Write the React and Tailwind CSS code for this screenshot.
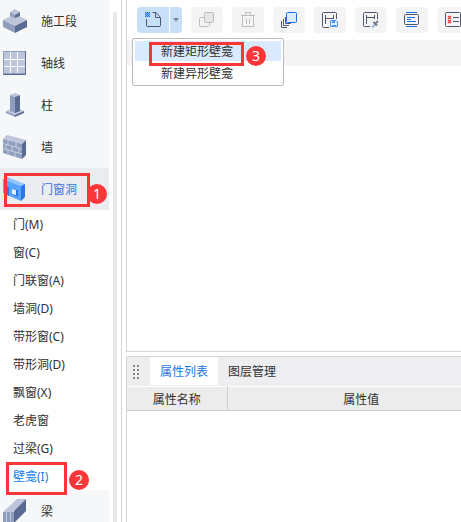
import React from "react";

function StageIcon() {
  return (
    <svg width="24" height="24" viewBox="0 0 24 24">
      <path d="M0 11L12 5L24 11L12 17Z" fill="#bcc5d9" />
      <path d="M0 11L12 17V24L0 18Z" fill="#8f9ebf" />
      <path d="M12 17L24 11V18L12 24Z" fill="#5a6b91" />
      <path d="M7 3L12 0L17 3L12 6Z" fill="#bcc5d9" />
      <path d="M7 3L12 6V9L7 7Z" fill="#8f9ebf" />
      <path d="M12 6L17 3V7L12 9Z" fill="#5a6b91" />
    </svg>
  );
}

function AxisIcon() {
  return (
    <svg width="24" height="24" viewBox="0 0 24 24">
      <path d="M0 0H23V24H0Z" fill="#5a6b91" />
      <path d="M0 0H22V23H0Z" fill="#8f9ebf" />
      <path d="M1 1H22V22H1Z" fill="#bcc5d9" />
      <path d="M7.500 1V22M14.500 1V22M1 8.500H22M1 15.500H22" stroke="#fff" />
    </svg>
  );
}

function ColumnIcon() {
  return (
    <svg width="24" height="24" viewBox="0 0 24 24">
      <path d="M3 18L12 14L21 18L12 22Z" fill="#bcc5d9" />
      <path d="M3 18L12 22V24L3 20Z" fill="#8f9ebf" />
      <path d="M12 22L21 18V20L12 24Z" fill="#5a6b91" />
      <path d="M7 2L12 0L17 2L12 4Z" fill="#bcc5d9" />
      <path d="M7 2L12 4V20L7 18Z" fill="#8f9ebf" />
      <path d="M12 4L17 2V18L12 20Z" fill="#5a6b91" />
    </svg>
  );
}

function WallIcon() {
  return (
    <svg width="24" height="24" viewBox="0 0 24 24">
      <path d="M0 4L4 0L23 5L19 9Z" fill="#bcc5d9" />
      <path d="M0 4L19 9V24L0 18Z" fill="#8f9ebf" />
      <path d="M19 9L23 5V20L19 24Z" fill="#5a6b91" />
      <path
        d="M0 8.500L19 14M0 13.500L19 19M5 5.500V10M13 7.500V12M9 11V16M16 13V18M3 9.500V14M5 15V20M12 17V22"
        stroke="#c6cee0"
        fill="none"
      />
    </svg>
  );
}

function OpeningIcon() {
  return (
    <svg width="24" height="24" viewBox="0 0 24 24">
      <path d="M0 2L4 0L22 7L18 9Z" fill="#8fc5ff" />
      <path d="M18 9L22 7V20L18 24Z" fill="#2b77e8" />
      <path
        d="M0 2L18 9V24L6 19V10L4 9V18L0 16ZM9 11V18L15 20V13Z"
        fill="#55a5ff"
        fillRule="evenodd"
      />
      <path d="M9 11L15 13V20L9 18Z" fill="#2b77e8" />
      <path d="M9 12L13 13V18L9 17Z" fill="#ebf3ff" />
      <path d="M4 9L6 10V19L4 18Z" fill="#2b77e8" />
    </svg>
  );
}

function BeamIcon() {
  return (
    <svg width="24" height="24" viewBox="0 0 24 24">
      <path d="M0 13L14 0H23L10 13Z" fill="#bcc5d9" />
      <path d="M0 13H11V25H0Z" fill="#8f9ebf" />
      <path d="M11 12L23 0V12L11 24Z" fill="#5a6b91" />
      <path d="M3.500 13V24M7.500 13V24" stroke="#bcc5d9" />
    </svg>
  );
}

const groups = [
  { label: "施工段", Icon: StageIcon },
  { label: "轴线", Icon: AxisIcon },
  { label: "柱", Icon: ColumnIcon },
  { label: "墙", Icon: WallIcon },
  { label: "门窗洞", Icon: OpeningIcon, open: true, mark: 1 },
];

const openings = [
  "门(M)",
  "窗(C)",
  "门联窗(A)",
  "墙洞(D)",
  "带形窗(C)",
  "带形洞(D)",
  "飘窗(X)",
  "老虎窗",
  "过梁(G)",
];

function Badge({ className, children }) {
  return (
    <span
      className={
        "pointer-events-none absolute z-20 flex size-5 items-center justify-center rounded-full bg-[#fb3638] text-sm text-white " +
        className
      }
    >
      {children}
    </span>
  );
}

function Frame({ className }) {
  return (
    <span className={"pointer-events-none absolute z-20 border-3 border-[#fb3638] " + className} />
  );
}

function Group({ label, Icon, open, mark }) {
  return (
    <div className="relative">
      <button
        type="button"
        aria-expanded={!!open}
        className={
          "flex h-[42px] w-full items-center gap-[14px] pl-[3px] text-left " +
          (open ? "bg-[#ebecf0] text-[#3f72e0]" : "bg-[#f5f7f9]")
        }
      >
        <Icon />
        <span className="pt-0.5">{label}</span>
      </button>
      {mark && (
        <>
          <Frame className="top-[5px] right-[19px] bottom-[3px] left-1" />
          <Badge className="top-4 left-[87px]">{mark}</Badge>
        </>
      )}
    </div>
  );
}

function Sidebar() {
  return (
    <div className="flex shrink-0 gap-1 border-r border-[#d5d5d5] pr-1">
      <nav className="w-[109px]">
        {groups.map((g) => (
          <Group key={g.label} {...g} />
        ))}
        {openings.map((label) => (
          <button key={label} type="button" className="block h-7 w-full pt-0.5 pl-[13px] text-left">
            {label}
          </button>
        ))}
        <div className="relative">
          <button
            type="button"
            className="block h-7 w-full pt-0.5 pl-[13px] text-left text-[#1280f0]"
          >
            壁龛(I)
          </button>
          <Frame className="top-0 -bottom-[5px] left-[6px] w-[61px]" />
          <Badge className="top-2 left-[69px]">2</Badge>
        </div>
        <Group label="梁" Icon={BeamIcon} />
      </nav>
      <div className="mt-3 w-1 rounded-t-sm bg-[#e8e8e8]" />
    </div>
  );
}

function NewIcon() {
  return (
    <svg width="16" height="16" viewBox="0 0 16 16" fill="none" stroke="#50566d">
      <path d="M1.500 7V13.500Q1.500 14.500 2.500 14.500H14.500Q15.500 14.500 15.500 13.500V5.500L11 0.500H7.500M10.500 1V5.500H15" />
      <path d="M0 0H5V5H0Z" fill="#8dbcf4" stroke="none" />
      <path
        d="M0 0.500H5M0 2.500H5M0 4.500H5M1 1.500H5M1 3.500H5"
        stroke="#1b70e0"
        strokeDasharray="1 1"
      />
    </svg>
  );
}

function CopyIcon() {
  return (
    <svg width="16" height="16" viewBox="0 0 16 16" fill="none" stroke="#bdbdbd">
      <rect x="0.500" y="5.500" width="10" height="9" rx="1" />
      <rect x="5.500" y="0.500" width="9" height="10" rx="1" fill="#e5e5e5" />
    </svg>
  );
}

function TrashIcon() {
  return (
    <svg width="16" height="16" viewBox="0 0 16 16" fill="none" stroke="#bdbdbd">
      <path d="M1 3.500H15M5.500 3V0.500H10.500V3M2.500 3.500V14.500H13.500V3.500M6.500 7V12M9.500 7V12" />
    </svg>
  );
}

function LayersIcon() {
  return (
    <svg width="16" height="16" viewBox="0 0 16 16" fill="none" stroke="#50566d">
      <path d="M4.500 5V11.500H10M2.500 7V13.500H8M0.500 9V15.500H6" />
      <rect x="5.500" y="0.500" width="10" height="10" rx="1" fill="#dcecff" stroke="#1b70e0" />
    </svg>
  );
}

function SaveIcon() {
  return (
    <svg width="16" height="16" viewBox="0 0 16 16" fill="none" stroke="#50566d">
      <path d="M7 15.500H1.500Q0.500 15.500 0.500 14.500V1.500Q0.500 0.500 1.500 0.500H13.500Q14.500 0.500 14.500 1.500V7M3.500 3V12M3.500 6.500H11.500M11.500 3V7" />
      <path d="M8.500 8.500H14L15.500 10V14.500H8.500Z" fill="#deefff" stroke="#4c96ec" />
      <path d="M10 9H13V11H10ZM10 13H14V15H10Z" fill="#4c96ec" stroke="none" />
    </svg>
  );
}

function PickIcon() {
  return (
    <svg width="16" height="16" viewBox="0 0 16 16" fill="none" stroke="#50566d">
      <path d="M7 14.500H1.500Q0.500 14.500 0.500 13.500V1.500Q0.500 0.500 1.500 0.500H13.500Q14.500 0.500 14.500 1.500V7M3.500 3V12M3.500 5.500H11.500M11.500 3V7" />
      <path d="M9 15.500L12 12.500" stroke="#8ebae8" strokeWidth="2" />
      <path d="M10.500 10L14 13.500M12 12L15 9" strokeWidth="2" stroke="#747b8c" />
    </svg>
  );
}

function AlignIcon() {
  return (
    <svg width="16" height="16" viewBox="0 0 16 16" fill="none" stroke="#1b70e0">
      <rect x="0.500" y="2.500" width="14" height="10" rx="1" stroke="#50566d" />
      <path d="M2 0.500H13M2 14.500H13M3 5.500H11M3 7.500H7M3 9.500H12" />
    </svg>
  );
}

function CheckListIcon() {
  return (
    <svg width="16" height="16" viewBox="0 0 16 16" fill="none" stroke="#50566d">
      <rect x="0.500" y="0.500" width="15" height="14" rx="1" />
      <path d="M8 5.500H14M8 9.500H14" />
      <path
        d="M3 4L6 7M6 4L3 7M3 8L6 11M6 8L3 11"
        stroke="#ec4545"
        strokeWidth="1.600"
      />
    </svg>
  );
}

const tools = [
  { name: "复制", Icon: CopyIcon, disabled: true },
  { name: "删除", Icon: TrashIcon, disabled: true },
  { name: "层间复制", Icon: LayersIcon },
  { name: "存档", Icon: SaveIcon },
  { name: "提取", Icon: PickIcon },
  { name: "排序", Icon: AlignIcon },
  { name: "检查", Icon: CheckListIcon },
];

function Toolbar() {
  return (
    <div className="relative flex h-10 gap-[9px] pt-[7px] pl-[10px]">
      <div className="flex shrink-0 gap-px">
        <button
          type="button"
          aria-label="新建"
          className="flex h-[26px] w-8 items-center justify-center rounded-l bg-[#c8dffa]"
        >
          <NewIcon />
        </button>
        <button
          type="button"
          aria-label="新建选项"
          aria-expanded="true"
          className="flex h-[26px] w-3 items-center justify-center rounded-r bg-[#c8dffa]"
        >
          <svg width="6" height="4" viewBox="0 0 6 4">
            <path d="M0 0H6L3 4Z" fill="#838995" />
          </svg>
        </button>
      </div>
      {tools.map(({ name, Icon, disabled }) => (
        <button
          key={name}
          type="button"
          aria-label={name}
          disabled={disabled}
          className="flex h-[26px] w-8 shrink-0 items-center justify-center rounded bg-[#f4f4f4]"
        >
          <Icon />
        </button>
      ))}
      <div
        role="menu"
        className="absolute top-[38px] left-[5px] z-10 flex w-[152px] flex-col gap-0.5 rounded-xs border border-[#bdbdbd] bg-white p-0.5"
      >
        <button
          type="button"
          role="menuitem"
          className="h-5 bg-[#d9eaff] pt-0.5 pl-[26px] text-left"
        >
          新建矩形壁龛
        </button>
        <button type="button" role="menuitem" className="h-5 pt-0.5 pl-[26px] text-left">
          新建异形壁龛
        </button>
        <Frame className="top-[3px] left-4 h-6 w-[95px]" />
        <Badge className="top-[7px] left-[113px]">3</Badge>
      </div>
    </div>
  );
}

function Properties() {
  return (
    <section className="min-h-0 flex-1 border-t border-l border-[#d5d5d5]">
      <div role="tablist" className="flex h-[29px] bg-[#eeeef1]">
        <div className="flex w-[23px] items-center pl-[6px]">
          <svg width="6" height="14" viewBox="0 0 6 14" fill="#858585">
            <path d="M0 0H2V2H0ZM4 0H6V2H4ZM0 4H2V6H0ZM4 4H6V6H4ZM0 8H2V10H0ZM4 8H6V10H4ZM0 12H2V14H0ZM4 12H6V14H4Z" />
          </svg>
        </div>
        <button
          type="button"
          role="tab"
          aria-selected="true"
          className="h-7 bg-white px-[10px] pt-0.5 text-[#1677e8]"
        >
          属性列表
        </button>
        <button type="button" role="tab" aria-selected="false" className="h-7 px-[10px] pt-0.5">
          图层管理
        </button>
      </div>
      <table className="w-full table-fixed border-collapse bg-[#ececec]">
        <thead>
          <tr className="h-6 border-t border-b border-t-white border-b-[#cfcfcf]">
            <th className="w-[100px] border-r border-[#cfcfcf] p-0 pt-0.5 font-normal">属性名称</th>
            <th className="p-0 pt-0.5 pl-[34px] font-normal">属性值</th>
          </tr>
        </thead>
      </table>
    </section>
  );
}

export default function App() {
  return (
    <div className="flex h-screen overflow-hidden bg-white font-['Noto_Sans','Noto_Sans_CJK_SC',sans-serif] text-xs text-[#303030]">
      <Sidebar />
      <main className="ml-1 flex min-w-0 flex-1 flex-col gap-1 overflow-hidden">
        <section className="flex h-[352px] shrink-0 flex-col border-b border-l border-[#d5d5d5]">
          <Toolbar />
          <div className="h-[26px] bg-[#f4f4f4]" />
        </section>
        <Properties />
      </main>
    </div>
  );
}
